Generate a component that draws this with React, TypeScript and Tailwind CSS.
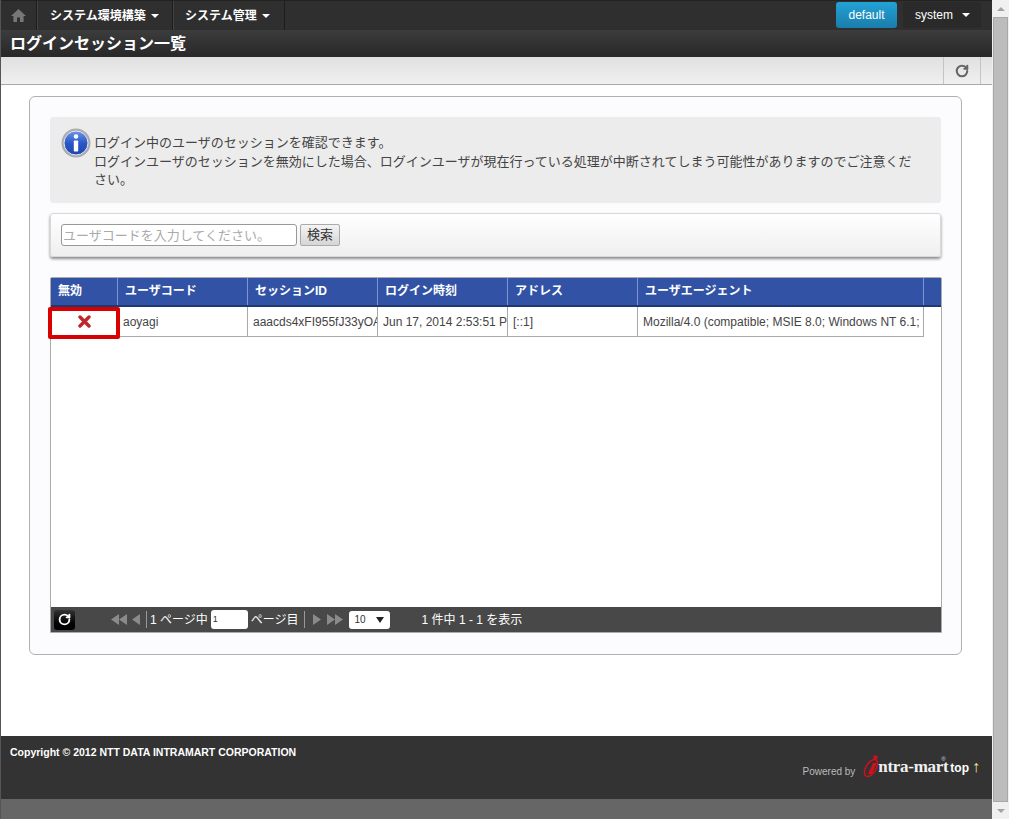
import { RotateCw } from "lucide-react"

const font = "font-['Liberation_Sans','Noto_Sans_CJK_JP',sans-serif]"

const columns = [
  { label: "無効", width: "w-[67px]" },
  { label: "ユーザコード", width: "w-[130px]" },
  { label: "セッションID", width: "w-[130px]" },
  { label: "ログイン時刻", width: "w-[130px]" },
  { label: "アドレス", width: "w-[130px]" },
  { label: "ユーザエージェント", width: "w-[286px]" },
]

const cells = [
  { text: "aoyagi", width: "w-[130px]" },
  { text: "aaacds4xFI955fJ33yOAb", width: "w-[130px]" },
  { text: "Jun 17, 2014 2:53:51 PM", width: "w-[130px]" },
  { text: "[::1]", width: "w-[130px]" },
  { text: "Mozilla/4.0 (compatible; MSIE 8.0; Windows NT 6.1; WOW64)", width: "w-[286px]" },
]

function Caret() {
  return <span className="inline-block w-0 h-0 border-x-[4px] border-x-transparent border-t-[4px] border-t-white" />
}

function HomeIcon() {
  return (
    <svg width="15" height="15" viewBox="0 0 15 15" fill="#777">
      <path d="M7.5 1 L15 8 H12.6 V14 H9 V9.5 H6 V14 H2.4 V8 H0 Z" />
    </svg>
  )
}

function InfoIcon() {
  return (
    <svg width="30" height="30" viewBox="0 0 30 30">
      <defs>
        <linearGradient id="infoBlue" x1="0" y1="0" x2="0" y2="1">
          <stop offset="0" stopColor="#6f95e8" />
          <stop offset="0.5" stopColor="#2a58c8" />
          <stop offset="1" stopColor="#1f45ae" />
        </linearGradient>
      </defs>
      <circle cx="15" cy="15" r="14.5" fill="#a9adb3" />
      <circle cx="15" cy="15" r="12" fill="url(#infoBlue)" stroke="#e4e6ea" strokeWidth="1" />
      <circle cx="15" cy="8.5" r="2.3" fill="#fff" />
      <rect x="12.8" y="12.5" width="4.4" height="11" rx="0.8" fill="#fff" />
    </svg>
  )
}

function Triangle({ dir, fill = "#8a8a8a", size = 8 }: { dir: "left" | "right"; fill?: string; size?: number }) {
  return (
    <svg width={size} height="11" viewBox="0 0 8 11" fill={fill}>
      {dir === "left" ? <path d="M8 0 V11 L0 5.5 Z" /> : <path d="M0 0 V11 L8 5.5 Z" />}
    </svg>
  )
}

function Logo() {
  return (
    <div className="relative flex items-baseline w-[86px] h-[24px]">
      <svg className="absolute left-0 top-0" width="24" height="24" viewBox="0 0 24 24" fill="none">
        <ellipse cx="11" cy="14" rx="5" ry="9.5" transform="rotate(32 11 14)" stroke="#d0101c" strokeWidth="1.5" />
        <path d="M13 9 L17 9 L12 20 L8 20 Z" fill="#d0101c" />
        <circle cx="15.5" cy="3.5" r="2.2" fill="#d0101c" />
      </svg>
      <span className="absolute left-[18px] top-[3px] font-['Liberation_Serif',serif] font-bold text-[17px] leading-[20px] tracking-[-0.3px] text-[#f0f0f0] whitespace-nowrap">
        ntra-mart
      </span>
      <span className="absolute left-[81px] top-[2px] text-[6px] leading-[6px] text-[#ddd]">®</span>
    </div>
  )
}

export default function App() {
  return (
    <div className={`${font} flex w-[1009px] h-[819px] overflow-hidden bg-white text-[12px]`}>
      <div className="flex flex-col w-[992px] h-full border-l border-l-[#555] bg-white">
        {/* global nav */}
        <div className="flex h-[30px] justify-between bg-[#2f2f2f] border-t border-t-[#222]">
          <div className="flex h-full">
            <div className="flex items-center justify-center w-[36px] border-r border-r-[#1c1c1c]">
              <HomeIcon />
            </div>
            <div className="flex items-center gap-[5px] w-[136px] pl-[12px] border-l border-l-[#444] border-r border-r-[#1c1c1c] text-white font-bold">
              <span>システム環境構築</span>
              <Caret />
            </div>
            <div className="flex items-center gap-[5px] w-[112px] pl-[11px] border-l border-l-[#444] border-r border-r-[#1c1c1c] text-white font-bold">
              <span>システム管理</span>
              <Caret />
            </div>
          </div>
          <div className="flex h-full items-start pt-[1px] pr-[11px] gap-[6px]">
            <div className="flex items-center justify-center w-[61px] h-[26px] rounded-[3px] bg-gradient-to-b from-[#23a2d6] to-[#1a7dab] text-white text-[12px]">
              default
            </div>
            <div className="flex items-center gap-[9px] w-[78px] h-[26px] pl-[12px] rounded-[2px] bg-[#2a2a2a] text-white text-[12px]">
              <span>system</span>
              <Caret />
            </div>
          </div>
        </div>

        {/* page title */}
        <div className="flex items-center h-[27px] pl-[9px] bg-gradient-to-b from-[#3c3c3c] to-[#282828] text-white font-bold text-[16px]">
          ログインセッション一覧
        </div>

        {/* toolbar */}
        <div className="flex justify-end h-[28px] pr-[11px] bg-gradient-to-b from-[#e0e0e0] to-[#f0f0f0] border-b-[1px] border-b-[#aaa]">
          <div className="flex items-center justify-center w-[38px] h-full border-x border-x-[#c4c4c4]">
            <RotateCw size={14} strokeWidth={3.5} className="text-[#666]" />
          </div>
        </div>

        {/* content */}
        <div className="flex-1 pt-[11px] pl-[28px]">
          <div className="flex flex-col w-[933px] h-[559px] pt-[20px] px-[20px] rounded-[6px] border border-[#b0b0b0] bg-[#fcfcff]">
            <div className="flex gap-[3px] w-[891px] h-[86px] pt-[11px] pl-[11px] pr-[24px] rounded-[3px] bg-[#ececec] text-[#444] text-[13px] leading-[18.5px]">
              <div className="shrink-0">
                <InfoIcon />
              </div>
              <p className="pt-[6px]">
                ログイン中のユーザのセッションを確認できます。
                <br />
                ログインユーザのセッションを無効にした場合、ログインユーザが現在行っている処理が中断されてしまう可能性がありますのでご注意ください。
              </p>
            </div>

            <div className="flex items-center gap-[3px] w-[891px] h-[44px] mt-[10px] pl-[10px] rounded-[3px] border border-[#d8d8d8] bg-gradient-to-b from-white to-[#efefef] shadow-[0_2px_3px_rgba(0,0,0,0.45)]">
              <input
                readOnly
                placeholder="ユーザコードを入力してください。"
                className="w-[236px] h-[22px] px-[1px] rounded-[3px] border border-[#999] bg-white text-[13px] placeholder:text-[#aaa] outline-none"
              />
              <div className="flex items-center justify-center w-[40px] h-[22px] rounded-[2px] border border-[#aaa] bg-gradient-to-b from-[#f4f4f4] to-[#d6d6d6] text-[#333] text-[13px]">
                検索
              </div>
            </div>

            {/* grid */}
            <div className="relative flex flex-col w-[892px] h-[356px] mt-[20px] border border-[#aaa] bg-white rounded-t-[2px]">
              <div className="flex h-[29px] bg-[#3253a5] border-b-2 border-b-[#1f3773] text-white font-bold">
                {columns.map((c) => (
                  <div
                    key={c.label}
                    className={`flex items-center ${c.width} pl-[7px] pb-[1px] border-r border-r-[#7e94cc] shrink-0`}
                  >
                    {c.label}
                  </div>
                ))}
                <div className="flex-1" />
              </div>
              <div className="flex h-[30px] w-[873px] text-[#444]">
                <div className="flex items-center justify-center w-[67px] shrink-0 border-b border-r border-[#aaa]">
                  <svg width="13" height="13" viewBox="0 0 13 13">
                    <path d="M2 2 L11 11 M11 2 L2 11" stroke="#c0262c" strokeWidth="3.4" strokeLinecap="round" />
                  </svg>
                </div>
                {cells.map((c) => (
                  <div
                    key={c.text}
                    className={`flex items-center ${c.width} shrink-0 pl-[5px] border-b border-r border-[#aaa] overflow-hidden whitespace-nowrap`}
                  >
                    {c.text}
                  </div>
                ))}
              </div>
              <div className="flex-1" />

              {/* pager */}
              <div className="flex items-center h-[25px] bg-[#484848] text-white">
                <div className="flex items-center justify-center w-[21px] h-[20px] ml-[3px] rounded-[3px] bg-gradient-to-b from-[#333] to-[#000]">
                  <RotateCw size={13} strokeWidth={3.5} className="text-white" />
                </div>
                <div className="flex items-center ml-[36px]">
                  <Triangle dir="left" />
                  <Triangle dir="left" />
                </div>
                <div className="ml-[5px]">
                  <Triangle dir="left" />
                </div>
                <div className="w-px h-[17px] ml-[6px] bg-[#999]" />
                <span className="ml-[3px]">1 ページ中</span>
                <div className="flex items-center w-[37px] h-[19px] ml-[3px] pl-[2px] rounded-[3px] bg-white text-[#333] text-[9px]">
                  1
                </div>
                <span className="ml-[3px]">ページ目</span>
                <div className="w-px h-[17px] ml-[5px] bg-[#999]" />
                <div className="ml-[8px]">
                  <Triangle dir="right" />
                </div>
                <div className="flex items-center ml-[6px]">
                  <Triangle dir="right" />
                  <Triangle dir="right" />
                </div>
                <div className="flex items-center justify-between w-[41px] h-[18px] ml-[6px] pl-[6px] pr-[6px] rounded-[3px] bg-white text-[#333] text-[10px]">
                  <span>10</span>
                  <span className="w-0 h-0 border-x-[4px] border-x-transparent border-t-[6px] border-t-[#222]" />
                </div>
                <span className="ml-[32px]">1 件中 1 - 1 を表示</span>
              </div>

              {/* annotation */}
              <div className="absolute left-[-3px] top-[29px] w-[72px] h-[32px] rounded-[2px] border-[4px] border-[#d90000]" />
            </div>
          </div>
        </div>

        {/* footer */}
        <div className="flex justify-between h-[63px] pl-[9px] pr-[12px] bg-[#333] text-white">
          <div className="pt-[10px] text-[10.5px] leading-[13px] font-bold">Copyright © 2012 NTT DATA INTRAMART CORPORATION</div>
          <div className="flex items-start pt-[18px]">
            <span className="mt-[12px] mr-[5px] text-[10px] leading-[12px] text-[#bbb]">Powered by</span>
            <Logo />
            <span className="mt-[7px] ml-[4px] text-[12px] leading-[14px] font-bold">top</span>
            <span className="mt-[4px] ml-[3px] text-[16px] leading-[18px] text-[#f5e9a0]">↑</span>
          </div>
        </div>
        <div className="h-[20px] bg-[#666]" />
      </div>

      {/* scrollbar */}
      <div className="flex flex-col items-center w-[17px] h-full bg-[#f0f0f0]">
        <div className="flex items-center justify-center h-[17px]">
          <span className="w-0 h-0 border-x-[4px] border-x-transparent border-b-[4px] border-b-[#a3a3a3]" />
        </div>
        <div className="flex-1 w-[15px] bg-[#bcbcbc] border border-[#a8a8a8]" />
        <div className="flex items-center justify-center h-[17px]">
          <span className="w-0 h-0 border-x-[4px] border-x-transparent border-t-[4px] border-t-[#a3a3a3]" />
        </div>
      </div>
    </div>
  )
}
